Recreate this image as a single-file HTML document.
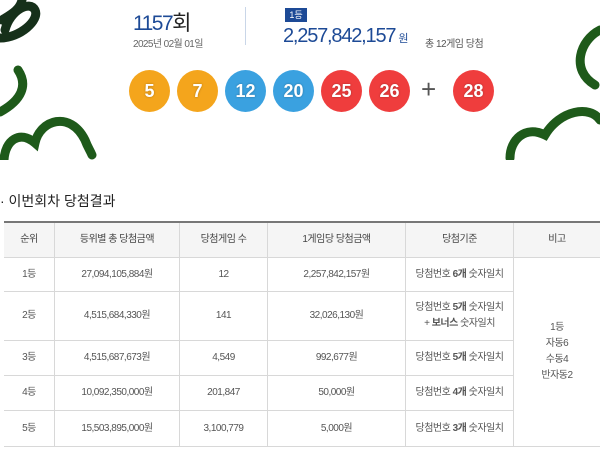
<!DOCTYPE html>
<html><head><meta charset="utf-8"><style>
body{margin:0;width:600px;height:457px;background:#fff;overflow:hidden;position:relative;font-family:"Liberation Sans","Noto Sans CJK KR",sans-serif;}
.abs{position:absolute}
.ball{position:absolute;top:70px;width:41px;height:42px;border-radius:50%;color:#fff;font-size:18px;line-height:42px;text-align:center;font-weight:bold;text-shadow:0 0 2px rgba(0,0,0,.3)}
.y{background:#f4a51c}.b{background:#3aa1e0}.r{background:#ef3d3d}
.c{position:absolute;display:flex;align-items:center;justify-content:center;text-align:center;font-size:10px;color:#555;letter-spacing:-0.5px;box-sizing:border-box;border-right:1px solid #d8d8d8;border-bottom:1px solid #d8d8d8;line-height:16px}
.h{background:#f5f5f5;color:#444}
</style></head><body>
<svg class="abs" style="left:0;top:0" width="600" height="160">
<g fill="none" stroke="#1e5a1a" stroke-width="9" stroke-linecap="round">
<path d="M22 0 C20 10 10 15 2 20 M0 38 C20 38 40 20 35 10 C30 0 10 10 5 30" stroke="#16301a"/>
<path d="M18 70 C28 85 22 100 0 112"/>
<path d="M4 160 C5 140 20 130 35 143 C40 120 70 110 85 140 C88 148 90 150 92 155"/>
<path d="M600 30 C580 40 570 70 595 85"/>
<path d="M510 158 C510 140 525 125 545 135 C560 110 590 105 600 120"/>
</g></svg>
<div class="abs" style="left:133px;top:7px;font-size:21px;color:#1d4a96;letter-spacing:-1.5px">1157<span style="color:#222">회</span></div>
<div class="abs" style="left:133px;top:35px;font-size:10px;color:#666;letter-spacing:-0.6px">2025년 02월 01일</div>
<div class="abs" style="left:245px;top:7px;width:1px;height:38px;background:#c9d6e8"></div>
<div class="abs" style="left:285px;top:8px;width:22px;height:14px;background:#1d4a96;color:#fff;font-size:9px;line-height:14px;text-align:center">1등</div>
<div class="abs" style="left:283px;top:25px;font-size:20px;color:#1d4a96;letter-spacing:-1.2px">2,257,842,157<span style="font-size:11px;color:#1d4a96;letter-spacing:0"> 원</span></div>
<div class="abs" style="left:425px;top:35px;font-size:10px;color:#555;letter-spacing:-0.5px">총 12게임 당첨</div>
<div class="ball y" style="left:129px">5</div>
<div class="ball y" style="left:177px">7</div>
<div class="ball b" style="left:225px">12</div>
<div class="ball b" style="left:273px">20</div>
<div class="ball r" style="left:321px">25</div>
<div class="ball r" style="left:369px">26</div>
<div class="abs" style="left:421px;top:74px;font-size:26px;color:#555">+</div>
<div class="ball r" style="left:453px">28</div>
<div class="abs" style="left:0;top:191px;font-size:14px;color:#222">· 이번회차 당첨결과</div>
<div class="abs" style="left:4px;top:221px;width:596px;height:2px;background:#777"></div>
<!-- header -->
<div class="c h" style="left:4px;top:223px;width:51px;height:35px">순위</div>
<div class="c h" style="left:55px;top:223px;width:125px;height:35px">등위별 총 당첨금액</div>
<div class="c h" style="left:180px;top:223px;width:88px;height:35px">당첨게임 수</div>
<div class="c h" style="left:268px;top:223px;width:138px;height:35px">1게임당 당첨금액</div>
<div class="c h" style="left:406px;top:223px;width:108px;height:35px">당첨기준</div>
<div class="c h" style="left:514px;top:223px;width:86px;height:35px;border-right:none">비고</div>
<!-- rows -->
<div class="c" style="left:4px;top:258px;width:51px;height:34px">1등</div>
<div class="c" style="left:55px;top:258px;width:125px;height:34px">27,094,105,884원</div>
<div class="c" style="left:180px;top:258px;width:88px;height:34px">12</div>
<div class="c" style="left:268px;top:258px;width:138px;height:34px">2,257,842,157원</div>
<div class="c" style="left:406px;top:258px;width:108px;height:34px"><span>당첨번호 <b>6개</b> 숫자일치</span></div>

<div class="c" style="left:4px;top:292px;width:51px;height:49px">2등</div>
<div class="c" style="left:55px;top:292px;width:125px;height:49px">4,515,684,330원</div>
<div class="c" style="left:180px;top:292px;width:88px;height:49px">141</div>
<div class="c" style="left:268px;top:292px;width:138px;height:49px">32,026,130원</div>
<div class="c" style="left:406px;top:292px;width:108px;height:49px"><span>당첨번호 <b>5개</b> 숫자일치<br>+ <b>보너스</b> 숫자일치</span></div>

<div class="c" style="left:4px;top:341px;width:51px;height:35px">3등</div>
<div class="c" style="left:55px;top:341px;width:125px;height:35px">4,515,687,673원</div>
<div class="c" style="left:180px;top:341px;width:88px;height:35px">4,549</div>
<div class="c" style="left:268px;top:341px;width:138px;height:35px">992,677원</div>
<div class="c" style="left:406px;top:341px;width:108px;height:35px"><span>당첨번호 <b>5개</b> 숫자일치</span></div>

<div class="c" style="left:4px;top:376px;width:51px;height:35px">4등</div>
<div class="c" style="left:55px;top:376px;width:125px;height:35px">10,092,350,000원</div>
<div class="c" style="left:180px;top:376px;width:88px;height:35px">201,847</div>
<div class="c" style="left:268px;top:376px;width:138px;height:35px">50,000원</div>
<div class="c" style="left:406px;top:376px;width:108px;height:35px"><span>당첨번호 <b>4개</b> 숫자일치</span></div>

<div class="c" style="left:4px;top:411px;width:51px;height:36px">5등</div>
<div class="c" style="left:55px;top:411px;width:125px;height:36px">15,503,895,000원</div>
<div class="c" style="left:180px;top:411px;width:88px;height:36px">3,100,779</div>
<div class="c" style="left:268px;top:411px;width:138px;height:36px">5,000원</div>
<div class="c" style="left:406px;top:411px;width:108px;height:36px"><span>당첨번호 <b>3개</b> 숫자일치</span></div>

<div class="c" style="left:514px;top:258px;width:86px;height:189px;border-right:none"><span>1등<br>자동6<br>수동4<br>반자동2</span></div>
</body></html>
